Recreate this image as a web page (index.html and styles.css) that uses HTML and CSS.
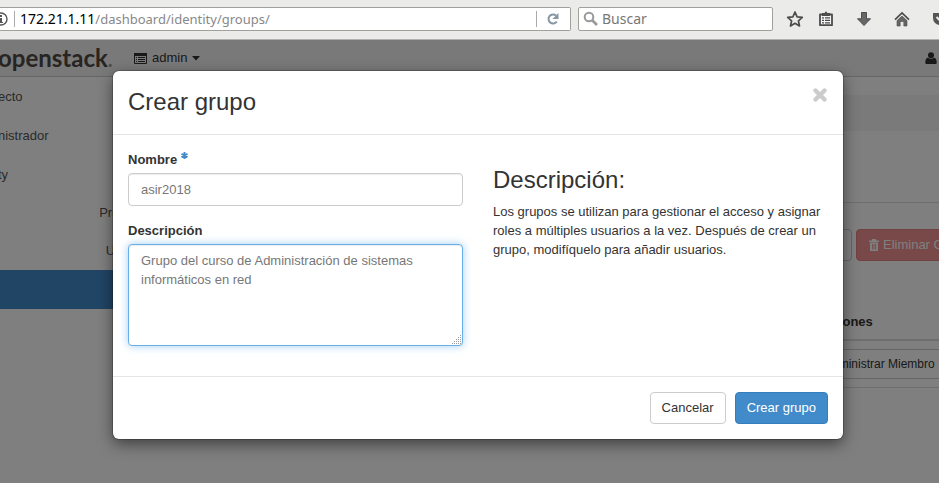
FILE: index.html
```html
<!DOCTYPE html>
<html lang="es">
<head>
<meta charset="utf-8">
<title>Crear grupo</title>
<link rel="stylesheet" href="styles.css">
</head>
<body>
<header class="browser">
  <div class="urlbar">
    <svg class="info" width="16" height="16" viewBox="0 0 16 16"><circle cx="8" cy="8" r="6" fill="none" stroke="#555" stroke-width="1.4"/><path d="M7 4h2v2H7zM6 7h3v4h1v1H6v-1h1V8H6z" fill="#555"/></svg>
    <span class="sep"></span>
    <div class="url"><b>172.21.1.11</b>/dashboard/identity/groups/</div>
    <span class="sep"></span>
    <button class="reload" aria-label="Recargar"><svg width="14" height="14" viewBox="0 0 14 14"><path d="M10.800 9.500A4.500 4.500 0 1 1 10 3.600" fill="none" stroke="#8795a5" stroke-width="2"/><path d="M12.500 1v6H6.500z" fill="#8795a5"/></svg></button>
  </div>
  <label class="search">
    <svg width="16" height="16" viewBox="0 0 16 16"><circle cx="6" cy="6" r="4.300" fill="none" stroke="#999" stroke-width="2"/><path d="M9 9l5 5" stroke="#999" stroke-width="2.600"/></svg>
    <input type="text" placeholder="Buscar" aria-label="Buscar">
  </label>
  <nav class="tools">
    <button aria-label="Marcador"><svg width="18" height="18" viewBox="0 0 18 18"><path d="M9 2l2.100 4.800 5.200.5-3.900 3.500 1.100 5.200L9 13.300 4.500 16l1.100-5.200L1.700 7.300l5.200-.5z" fill="none" stroke="#4c4c4c" stroke-width="1.700" stroke-linejoin="round"/></svg></button>
    <span class="toolsep"></span>
    <button aria-label="Lista"><svg width="16" height="16" viewBox="0 0 16 16"><path d="M2 3.500h12v10.700H2z" fill="#f4f4f4" stroke="#4c4c4c" stroke-width="1.800" stroke-linejoin="round"/><path d="M4 5V2h2.500L8 .3 9.500 2H12v3z" fill="#4c4c4c"/><path d="M4 6.800h2M7 6.800h5M4 9.300h2M7 9.300h5M4 11.800h2M7 11.800h5" stroke="#4c4c4c" stroke-width="1.200"/></svg></button>
    <button aria-label="Descargas"><svg width="16" height="16" viewBox="0 0 16 16"><path d="M5.500 1.500h5v6.300h4L8 14.500 1.500 7.800h4z" fill="#666" stroke="#4c4c4c" stroke-linejoin="round"/></svg></button>
    <button aria-label="Inicio"><svg width="16" height="16" viewBox="0 0 16 16"><path d="M1 8.700l7-6.700 7 6.700" fill="none" stroke="#4c4c4c" stroke-width="1.700"/><path d="M8 5l5 4.600V15H9.800v-4.500H6.200V15H3V9.600z" fill="#666" stroke="#4c4c4c" stroke-width=".6"/></svg></button>
    <button aria-label="Pocket"><svg width="16" height="16" viewBox="0 0 16 16"><path d="M1 2h14v5a7 7 0 0 1-14 0z" fill="#555"/><path d="M4.500 6L8 9.500 11.500 6" fill="none" stroke="#ebebea" stroke-width="2"/></svg></button>
  </nav>
</header>

<div class="page">
  <header class="topbar">
    <a class="brand" href="#">openstack<small>.</small></a>
    <button class="project"><svg width="13" height="11" viewBox="0 0 13 11"><path d="M.5 1.500h12v9H.5z" fill="none" stroke="#333"/><path d="M0 0h13v3H0z" fill="#333"/><path d="M2 4.500h1M4 4.500h7M2 6.500h1M4 6.500h7M2 8.500h1M4 8.500h7" stroke="#333"/></svg>admin<svg width="8" height="5" viewBox="0 0 8 5"><path d="M0 0h8L4 4.500z" fill="#333"/></svg></button>
    <svg class="user" width="12" height="12" viewBox="0 0 12 12"><circle cx="6" cy="3.200" r="3" fill="#333"/><path d="M1 12q-1-.5-.7-2.500Q.8 6 3 5.700q3 2 6 0 2.200.3 2.700 3.800.3 2-.7 2.500z" fill="#333"/></svg>
  </header>
  <div class="columns">
    <nav class="sidebar">
      <a class="group" href="#">ecto</a>
      <a class="group" href="#">nistrador</a>
      <a class="group" href="#">ty</a>
      <a class="item" href="#">Proyectos</a>
      <a class="item" href="#">Usuarios</a>
      <a class="item active" href="#">Grupos</a>
    </nav>
    <main class="content">
      <div class="crumbs"></div>
      <div class="rule"></div>
      <div class="actions">
        <button class="btn create" aria-label="Crear grupo"></button>
        <button class="btn danger"><svg width="10" height="12" viewBox="0 0 10 12"><path d="M0 1.500h3V0h4v1.500h3V3H0zM1 3.500h8V12H1z" fill="#fff"/><path d="M3.500 5v5.500M5 5v5.500M6.500 5v5.500" stroke="#f09390" stroke-width=".8"/></svg>Eliminar G</button>
      </div>
      <table class="groups">
        <thead><tr><th>Acciones</th></tr></thead>
        <tbody><tr><td><button class="btn small">Administrar Miembro</button></td></tr></tbody>
      </table>
    </main>
  </div>

  <div class="backdrop">
    <form class="modal" role="dialog" aria-labelledby="title">
      <header class="modal-head">
        <h3 id="title">Crear grupo</h3>
        <button class="close" type="button" aria-label="Cerrar"><svg width="14" height="14" viewBox="0 0 14 14"><path d="M2.500 2.500l9 9M11.500 2.500l-9 9" stroke="#ccc" stroke-width="4.400" stroke-linecap="round"/></svg></button>
      </header>
      <div class="modal-body">
        <div class="fields">
          <label for="name">Nombre <svg class="req" width="7" height="7" viewBox="0 0 7 7"><path d="M3.500 0v7M.5 1.700l6 3.600M6.500 1.700l-6 3.600" stroke="#428bca" stroke-width="1.900"/></svg></label>
          <input class="control" id="name" type="text" value="asir2018">
          <label for="desc">Descripción</label>
          <div class="area">
            <textarea class="control focused" id="desc">Grupo del curso de Administración de sistemas informáticos en red</textarea>
            <svg class="grip" width="10" height="10" viewBox="0 0 10 10"><path d="M8 0h1v1H8zM6 2h1v1H6zM8 2h1v1H8zM4 4h1v1H4zM6 4h1v1H6zM8 4h1v1H8zM2 6h1v1H2zM4 6h1v1H4zM6 6h1v1H6zM8 6h1v1H8zM0 8h1v1H0zM2 8h1v1H2zM4 8h1v1H4zM6 8h1v1H6zM8 8h1v1H8z" fill="#999"/></svg>
          </div>
        </div>
        <div class="help">
          <h3>Descripción:</h3>
          <p>Los grupos se utilizan para gestionar el acceso y asignar roles a múltiples usuarios a la vez. Después de crear un grupo, modifíquelo para añadir usuarios.</p>
        </div>
      </div>
      <footer class="modal-foot">
        <button class="btn" type="button">Cancelar</button>
        <button class="btn primary" type="submit">Crear grupo</button>
      </footer>
    </form>
  </div>
</div>
</body>
</html>
```
FILE: styles.css
```css
* { box-sizing: border-box; }
body {
  margin: 0;
  min-height: 100vh;
  display: flex;
  flex-direction: column;
  overflow: hidden;
  font: 13px/18px "Liberation Sans", Arial, sans-serif;
  color: #333;
}
button, input, textarea { font: inherit; color: inherit; }
button { background: none; border: 0; padding: 0; }
a { color: inherit; text-decoration: none; }
svg { display: block; flex: none; }

/* Browser toolbar */
.browser {
  display: flex;
  gap: 7px;
  height: 40px;
  padding: 7px 0 8px;
  background: #ebebea;
  border-bottom: 1px solid #b0b0ae;
  font: 14px/22px "Noto Sans", sans-serif;
  overflow: hidden;
}
.urlbar, .search {
  display: flex;
  align-items: center;
  height: 24px;
  background: #fff;
  border: 1px solid #a0a09c;
  border-radius: 2px;
}
.urlbar { flex: 1; border-left: 0; border-radius: 0 2px 2px 0; }
.info { margin-left: -7px; }
.sep { width: 1px; height: 16px; margin: 0 5px; background: #aaa; }
.url { flex: 1; font-size: 13px; color: #888; white-space: nowrap; }
.url b { font-size: 14px; font-weight: 400; color: #000; }
.reload { margin: 0 10px 0 4px; }
.search { width: 195px; padding: 0 4px; gap: 3px; }
.search input { flex: 1; min-width: 0; border: 0; padding: 0; outline: 0; background: none; }
.search input::placeholder { color: #777; opacity: 1; }
.tools { display: flex; align-items: center; gap: 22px; width: 159px; padding-left: 6px; }
.toolsep { width: 1px; height: 18px; margin: 0 -15px; background: #c8c8c6; }

/* Dashboard */
.page { position: relative; flex: 1; overflow: hidden; background: #fff; }
.topbar {
  display: flex;
  align-items: center;
  height: 37px;
  background: #f3f3f3;
  border-bottom: 1px solid #ccc;
}
.brand { flex: 0 0 134px; margin-left: -3px; padding-left: 1px; font: 700 24px/30px Lato, sans-serif; color: #4f4844; }
.brand small { color: #999; }
.project { display: flex; align-items: center; gap: 5px; margin-left: 3px; }
.user { margin-left: auto; margin-right: 2px; }
.columns { display: flex; }
.sidebar { width: 200px; }
.sidebar a { display: block; height: 39px; line-height: 40px; color: #555; }
.sidebar .group { margin-left: -2px; }
.sidebar .item { height: 38px; line-height: 38px; padding-right: 43px; text-align: right; }
.sidebar .active { height: 39px; background: #428bca; color: #fff; }
.content { flex: 1; margin-right: -60px; padding: 18px 15px 0; }
.crumbs { height: 36px; background: #f5f5f5; border-radius: 4px; }
.rule { height: 72px; border-bottom: 1px solid #ddd; }
.actions { display: flex; justify-content: flex-end; gap: 4px; margin-top: 26px; }
.btn {
  display: inline-flex;
  align-items: center;
  gap: 4px;
  padding: 6px 11px;
  border: 1px solid #ccc;
  border-radius: 4px;
  background: #fff;
  white-space: nowrap;
}
.btn.small { padding: 5px 8px; width: 150px; font-size: 12px; line-height: 18px; border-radius: 3px; }
.btn.create { width: 110px; }
.btn.danger { width: 128px; padding-left: 12px; background: #f09390; border-color: #e08480; color: #fff; }
.btn.primary { background: #428bca; border-color: #357ebd; color: #fff; }
.groups { width: 100%; margin-top: 52px; border-collapse: collapse; border-bottom: 1px solid #ddd; }
.groups th, .groups td { padding: 8px 0 8px 600px; text-align: left; }
.groups th { padding-top: 0; border-bottom: 2px solid #ddd; }

/* Dialog */
.backdrop { position: absolute; inset: 0; padding: 31px 96px 0 113px; background: rgba(0, 0, 0, .5); }
.modal {
  background: #fff;
  border-radius: 6px;
  box-shadow: 0 0 0 1px rgba(0, 0, 0, .2), 0 5px 15px rgba(0, 0, 0, .5);
}
.modal-head {
  display: flex;
  justify-content: space-between;
  padding: 16px 16px 18px 15px;
  border-bottom: 1px solid #e5e5e5;
}
h3 { margin: 0; font-size: 24px; line-height: 29px; font-weight: 400; }
.close { height: 16px; }
.modal-body { display: grid; grid-template-columns: 1fr 1fr; gap: 30px; padding: 15px 15px 30px; }
.fields label { display: flex; gap: 4px; margin-bottom: 3px; line-height: 20px; font-weight: 700; }
.req { margin-top: 2px; }
.control {
  display: block;
  width: 100%;
  height: 33px;
  padding: 6px 12px;
  border: 1px solid #ccc;
  border-radius: 4px;
  background: #fff;
  box-shadow: inset 0 1px 1px rgba(0, 0, 0, .075);
  color: #777;
  outline: 0;
}
input.control { margin-bottom: 15px; }
textarea.control { height: 102px; line-height: 19px; resize: none; overflow: hidden; }
.focused { border-color: #66afe9; box-shadow: inset 0 1px 1px rgba(0, 0, 0, .075), 0 0 8px rgba(102, 175, 233, .6); }
.area { position: relative; }
.grip { position: absolute; right: 1px; bottom: 1px; }
.help { padding-top: 15px; }
.help p { margin: 8px 0 0; line-height: 19px; }
.modal-foot { display: flex; justify-content: flex-end; gap: 9px; padding: 15px; border-top: 1px solid #e5e5e5; }
```
